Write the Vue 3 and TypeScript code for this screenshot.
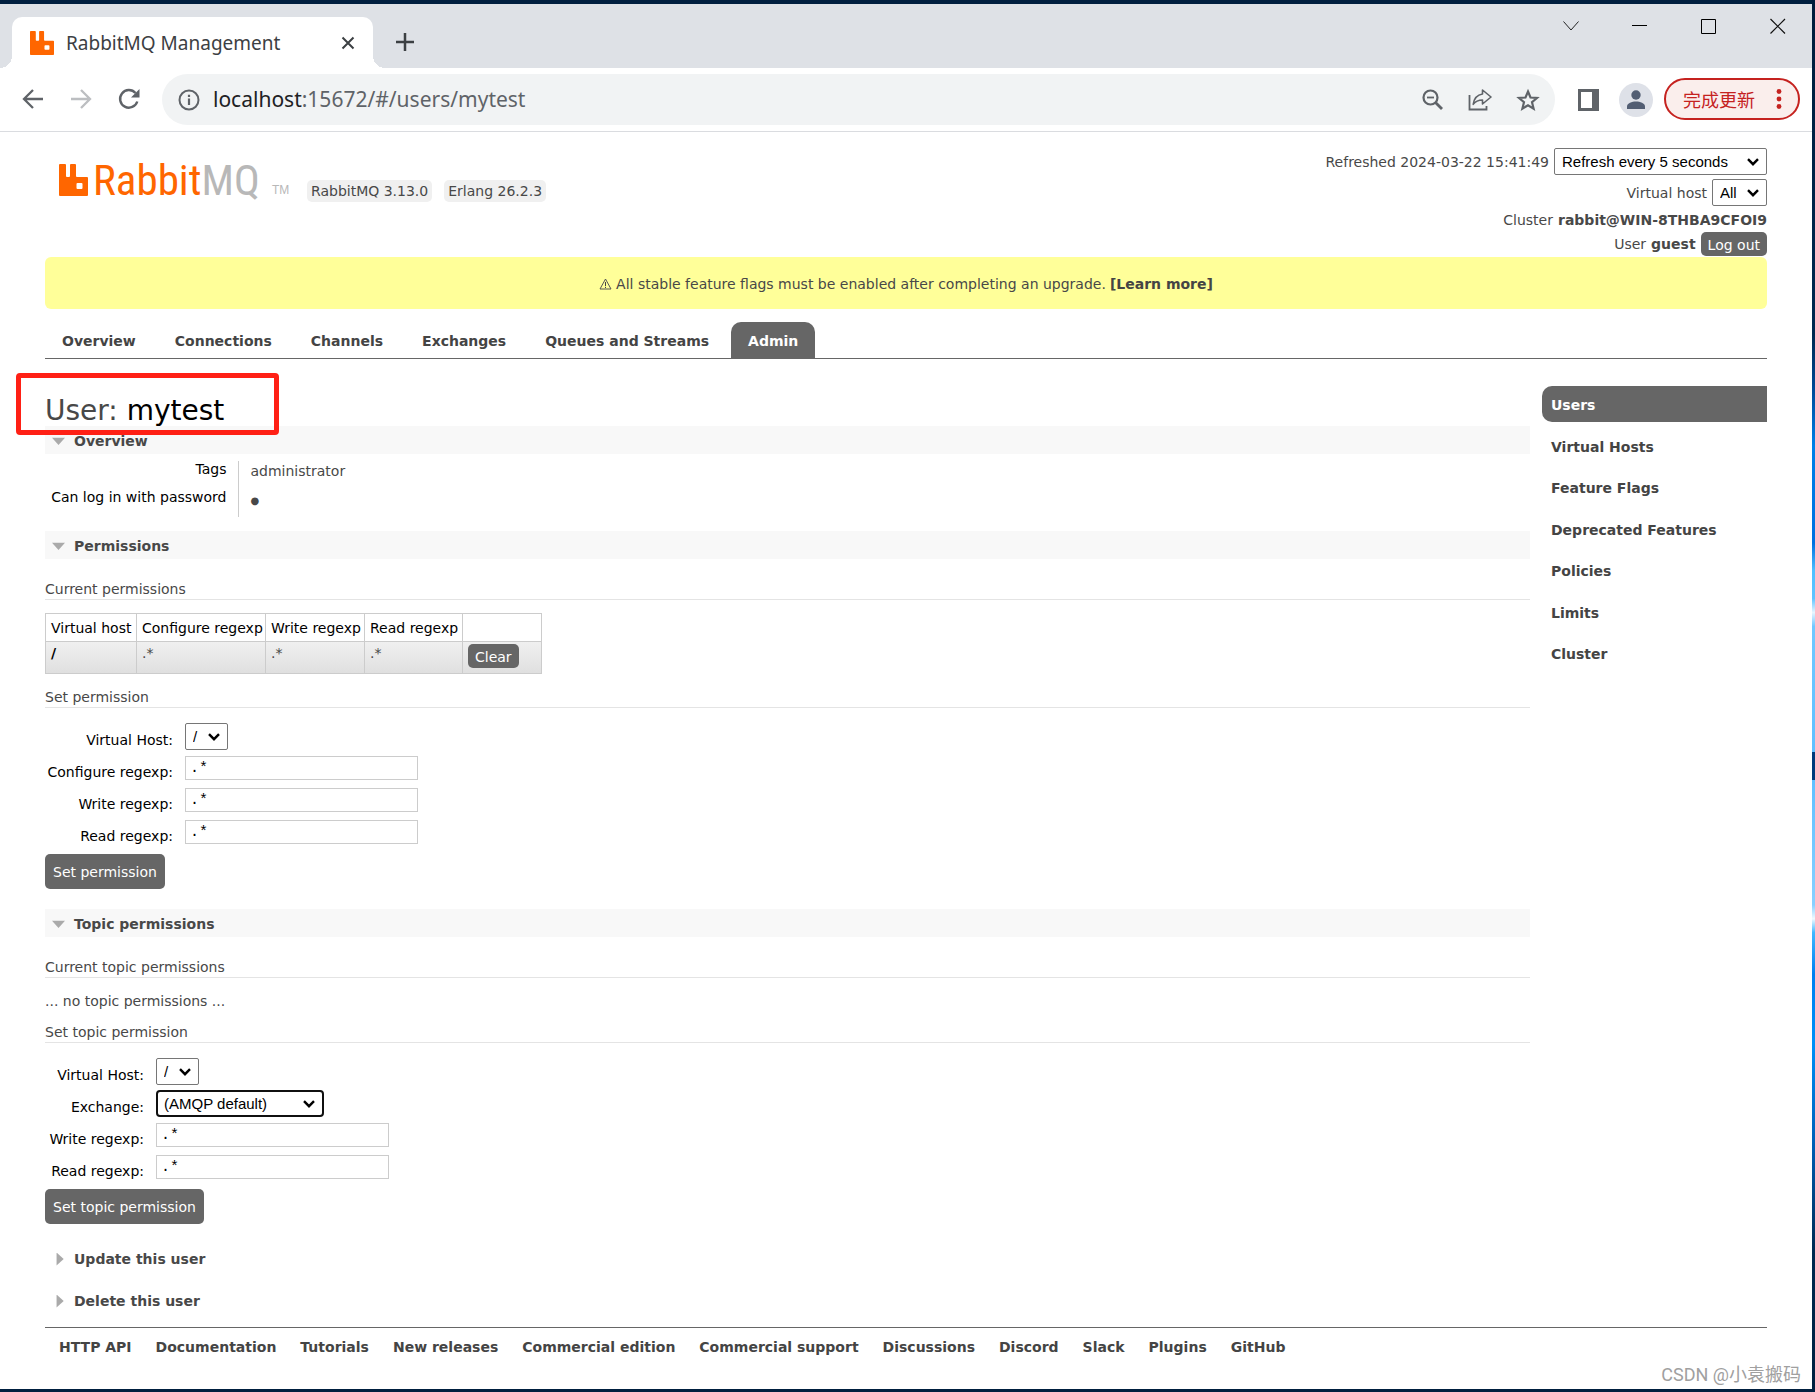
<script setup lang="ts">
import { ref } from 'vue'

const tabs = ['Overview', 'Connections', 'Channels', 'Exchanges', 'Queues and Streams', 'Admin']
const activeTab = ref('Admin')

const sections = [
  'Users',
  'Virtual Hosts',
  'Feature Flags',
  'Deprecated Features',
  'Policies',
  'Limits',
  'Cluster',
]
const activeSection = ref('Users')

const footerLinks = [
  'HTTP API',
  'Documentation',
  'Tutorials',
  'New releases',
  'Commercial edition',
  'Commercial support',
  'Discussions',
  'Discord',
  'Slack',
  'Plugins',
  'GitHub',
]

const permission = ref({ configure: '.*', write: '.*', read: '.*' })
const topicPermission = ref({ write: '.*', read: '.*' })
const address = { host: 'localhost', rest: ':15672/#/users/mytest' }
</script>

<template>
  <div class="desktop">
    <div class="window">
      <header class="tabstrip">
        <div class="browser-tab">
          <svg class="favicon" viewBox="0 0 29 32" preserveAspectRatio="none" aria-hidden="true">
            <path
              fill="#ff6600"
              fill-rule="evenodd"
              d="M1 0h5q1 0 1 1v11q0 1 1 1h2q1 0 1-1V1q0-1 1-1h4q1 0 1 1v11q0 1 1 1h10q1 0 1 1v17q0 1-1 1H1q-1 0-1-1V1q0-1 1-1zM18.500 19q-1 0-1 1v4q0 1 1 1h4q1 0 1-1v-4q0-1-1-1z"
            />
          </svg>
          <span class="browser-tab-title">RabbitMQ Management</span>
          <button class="icon-button" type="button" aria-label="Close tab">
            <svg width="14" height="14" viewBox="0 0 14 14">
              <path d="M1.500 1.500l11 11M12.500 1.500l-11 11" stroke="#3c4043" stroke-width="2" />
            </svg>
          </button>
        </div>
        <button class="icon-button new-tab" type="button" aria-label="New tab">
          <svg width="18" height="18" viewBox="0 0 18 18">
            <path d="M9 0v18M0 9h18" stroke="#3c4043" stroke-width="2.500" />
          </svg>
        </button>
        <div class="window-controls">
          <button class="icon-button" type="button" aria-label="Search tabs">
            <svg width="16" height="16" viewBox="0 0 16 16">
              <path d="M.5 3.500l7.500 8.500 7.500-8.500" fill="none" stroke="#222" />
            </svg>
          </button>
          <button class="icon-button" type="button" aria-label="Minimize">
            <svg width="16" height="16" viewBox="0 0 16 16">
              <path d="M0 7.500h15" stroke="#000" />
            </svg>
          </button>
          <button class="icon-button" type="button" aria-label="Maximize">
            <svg width="16" height="16" viewBox="0 0 16 16">
              <path d="M.5 1.500h14v14h-14z" fill="none" stroke="#000" />
            </svg>
          </button>
          <button class="icon-button" type="button" aria-label="Close">
            <svg width="16" height="16" viewBox="0 0 16 16">
              <path d="M.5 1l14.500 14.500M15 1L.5 15.500" stroke="#111" stroke-width="1.200" />
            </svg>
          </button>
        </div>
      </header>

      <div class="toolbar">
        <div class="nav-buttons">
          <button class="icon-button" type="button" aria-label="Back">
            <svg width="22" height="22" viewBox="0 0 22 22">
              <path d="M21 11H3M11 2l-9 9 9 9" fill="none" stroke="#5f6368" stroke-width="2.300" />
            </svg>
          </button>
          <button class="icon-button" type="button" aria-label="Forward">
            <svg width="22" height="22" viewBox="0 0 22 22">
              <path d="M1 11h18M11 2l9 9-9 9" fill="none" stroke="#bcbec1" stroke-width="2.300" />
            </svg>
          </button>
          <button class="icon-button" type="button" aria-label="Reload">
            <svg width="22" height="22" viewBox="0 0 22 22">
              <path
                d="M19.300 13.500A8.800 8.800 0 1 1 17.500 5"
                fill="none"
                stroke="#5f6368"
                stroke-width="2.400"
              />
              <path d="M21.500 1v8.500H13z" fill="#5f6368" />
            </svg>
          </button>
        </div>
        <div class="address-bar">
          <svg width="22" height="22" viewBox="0 0 22 22" aria-hidden="true">
            <circle cx="11" cy="11" r="9.500" fill="none" stroke="#5f6368" stroke-width="2" />
            <path d="M11 9.500v6.500M11 5.800v2.200" stroke="#5f6368" stroke-width="2.200" />
          </svg>
          <div class="url">
            <span class="url-host">{{ address.host }}</span>{{ address.rest }}
          </div>
          <button class="icon-button" type="button" aria-label="Zoom">
            <svg width="22" height="22" viewBox="0 0 22 22">
              <circle cx="8.500" cy="8.500" r="7" fill="none" stroke="#5f6368" stroke-width="2.200" />
              <path d="M5 8.500h7" stroke="#5f6368" stroke-width="1.800" />
              <path d="M13.500 13.500l6.500 6.500" stroke="#5f6368" stroke-width="2.800" />
            </svg>
          </button>
          <button class="icon-button" type="button" aria-label="Share">
            <svg width="24" height="22" viewBox="0 0 24 22">
              <path
                d="M1.500 6v14.500h17V17"
                fill="none"
                stroke="#5f6368"
                stroke-width="1.800"
              />
              <path
                d="M14.500 1l8.500 7-8.500 7v-4c-4 0-7 1.200-9.300 4.300C6 10 9 5.800 14.500 5z"
                fill="none"
                stroke="#5f6368"
                stroke-width="1.600"
                stroke-linejoin="round"
              />
            </svg>
          </button>
          <button class="icon-button" type="button" aria-label="Bookmark">
            <svg width="24" height="24" viewBox="0 0 24 24">
              <path
                d="M12 3.500l2.500 6 6.500.5-5 4.200 1.600 6.400L12 17.200l-5.600 3.400L8 14.200 3 10l6.500-.5z"
                fill="none"
                stroke="#5f6368"
                stroke-width="2.200"
              />
            </svg>
          </button>
        </div>
        <button class="icon-button side-panel" type="button" aria-label="Side panel">
          <svg width="22" height="22" viewBox="0 0 22 22">
            <path d="M0 0h21v22H0zM3 3v16h11V3z" fill="#5f6368" fill-rule="evenodd" />
          </svg>
        </button>
        <button class="avatar" type="button" aria-label="Profile">
          <svg width="20" height="20" viewBox="0 0 20 20">
            <circle cx="10" cy="5" r="4.700" fill="#525e73" />
            <path d="M1 19v-2.500c0-3.500 5-5 9-5s9 1.500 9 5V19z" fill="#525e73" />
          </svg>
        </button>
        <button class="update" type="button">
          完成更新
          <svg width="6" height="20" viewBox="0 0 6 20" aria-hidden="true">
            <g fill="#c5221f">
              <circle cx="3" cy="2.500" r="2.400" />
              <circle cx="3" cy="10" r="2.400" />
              <circle cx="3" cy="17.500" r="2.400" />
            </g>
          </svg>
        </button>
      </div>

      <div class="page">
        <div class="head">
          <div class="brand">
            <a class="logo" href="#/" aria-label="RabbitMQ">
              <svg width="29" height="32" viewBox="0 0 29 32" aria-hidden="true">
                <path
                  fill="#ff6600"
                  fill-rule="evenodd"
                  d="M1 0h5q1 0 1 1v11q0 1 1 1h2q1 0 1-1V1q0-1 1-1h4q1 0 1 1v11q0 1 1 1h10q1 0 1 1v17q0 1-1 1H1q-1 0-1-1V1q0-1 1-1zM18.500 19q-1 0-1 1v4q0 1 1 1h4q1 0 1-1v-4q0-1-1-1z"
                />
              </svg>
              <span class="logo-text">Rabbit<span class="logo-mq">MQ</span></span>
              <span class="logo-tm">TM</span>
            </a>
            <span class="badge">RabbitMQ 3.13.0</span>
            <span class="badge">Erlang 26.2.3</span>
          </div>
          <div class="status">
            <div class="status-row">
              <label for="refresh">Refreshed 2024-03-22 15:41:49</label>
              <select id="refresh" class="refresh-select">
                <option>Refresh every 5 seconds</option>
              </select>
            </div>
            <div class="status-row">
              <label for="vhost">Virtual host</label>
              <select id="vhost" class="vhost-select">
                <option>All</option>
              </select>
            </div>
            <div class="status-row status-cluster">
              <span>Cluster</span>
              <b>rabbit@WIN-8THBA9CFOI9</b>
            </div>
            <div class="status-row">
              <span>User</span>
              <b>guest</b>
              <button class="button button-small" type="button">Log out</button>
            </div>
          </div>
        </div>

        <div class="warning">
          <svg width="13" height="12" viewBox="0 0 13 12" aria-hidden="true">
            <path d="M6.500 1L12 11H1z" fill="none" stroke="#555" stroke-linejoin="round" />
            <path d="M6.500 4v4M6.500 8.800v1.200" stroke="#444" />
          </svg>
          <span>All stable feature flags must be enabled after completing an upgrade.</span>
          <a href="#/feature-flags">[Learn more]</a>
        </div>

        <nav class="tabs">
          <a
            v-for="tab in tabs"
            :key="tab"
            href="#/"
            :class="{ active: tab === activeTab }"
            @click.prevent="activeTab = tab"
            >{{ tab }}</a
          >
        </nav>

        <div class="columns">
          <main class="main">
            <h1>User: <b>mytest</b><span class="highlight"></span></h1>

            <section>
              <h2 class="bar open">Overview</h2>
              <table class="facts">
                <tbody>
                  <tr>
                    <th scope="row">Tags</th>
                    <td>administrator</td>
                  </tr>
                  <tr>
                    <th scope="row">Can log in with password</th>
                    <td><span class="dot">●</span></td>
                  </tr>
                </tbody>
              </table>
            </section>

            <section>
              <h2 class="bar open">Permissions</h2>
              <h3 class="first">Current permissions</h3>
              <table class="list">
                <colgroup>
                  <col class="col-vhost" />
                  <col class="col-configure" />
                  <col class="col-write" />
                  <col class="col-read" />
                  <col class="col-action" />
                </colgroup>
                <thead>
                  <tr>
                    <th scope="col">Virtual host</th>
                    <th scope="col">Configure regexp</th>
                    <th scope="col">Write regexp</th>
                    <th scope="col">Read regexp</th>
                    <th></th>
                  </tr>
                </thead>
                <tbody>
                  <tr>
                    <td><a class="vhost-link" href="#/vhosts">/</a></td>
                    <td>.*</td>
                    <td>.*</td>
                    <td>.*</td>
                    <td><button class="button button-small" type="button">Clear</button></td>
                  </tr>
                </tbody>
              </table>

              <h3>Set permission</h3>
              <form class="form" @submit.prevent>
                <div class="fields fields-wide">
                  <label for="p-vhost">Virtual Host:</label>
                  <select id="p-vhost" class="short-select">
                    <option>/</option>
                  </select>
                  <label for="p-configure">Configure regexp:</label>
                  <input id="p-configure" v-model="permission.configure" type="text" />
                  <label for="p-write">Write regexp:</label>
                  <input id="p-write" v-model="permission.write" type="text" />
                  <label for="p-read">Read regexp:</label>
                  <input id="p-read" v-model="permission.read" type="text" />
                </div>
                <button class="button" type="submit">Set permission</button>
              </form>
            </section>

            <section>
              <h2 class="bar open">Topic permissions</h2>
              <h3 class="first">Current topic permissions</h3>
              <p class="empty">... no topic permissions ...</p>
              <h3>Set topic permission</h3>
              <form class="form" @submit.prevent>
                <div class="fields fields-narrow">
                  <label for="t-vhost">Virtual Host:</label>
                  <select id="t-vhost" class="short-select">
                    <option>/</option>
                  </select>
                  <label for="t-exchange">Exchange:</label>
                  <select id="t-exchange" class="exchange-select">
                    <option>(AMQP default)</option>
                  </select>
                  <label for="t-write">Write regexp:</label>
                  <input id="t-write" v-model="topicPermission.write" type="text" />
                  <label for="t-read">Read regexp:</label>
                  <input id="t-read" v-model="topicPermission.read" type="text" />
                </div>
                <button class="button" type="submit">Set topic permission</button>
              </form>
            </section>

            <section class="collapsed">
              <h2 class="bar closed">Update this user</h2>
              <h2 class="bar closed">Delete this user</h2>
            </section>
          </main>

          <nav class="side">
            <a
              v-for="section in sections"
              :key="section"
              href="#/"
              :class="{ active: section === activeSection }"
              @click.prevent="activeSection = section"
              >{{ section }}</a
            >
          </nav>
        </div>

        <footer class="footer">
          <a v-for="link in footerLinks" :key="link" href="#/">{{ link }}</a>
        </footer>
      </div>
      <div class="watermark">CSDN @小袁搬码</div>
    </div>
  </div>
</template>

<style>
body {
  margin: 0;
}
</style>

<style scoped>
* {
  box-sizing: border-box;
}

.desktop {
  display: flex;
  min-height: 100vh;
  padding: 4px 3px 3px 0;
  background:
    linear-gradient(
        #001c3c 0%,
        #002850 24%,
        #004a98 28%,
        #0080e8 32%,
        #0070e0 39%,
        #50c0ff 41%,
        #60c4ff 43%,
        #e8f6ff 44%,
        #70c8ff 45%,
        #60c0ff 54%,
        #003a7c 54%,
        #003a7c 56%,
        #60c0ff 56%,
        #88d0ff 65%,
        #f0faff 66%,
        #40b8ff 67%,
        #0080f0 70%,
        #0090f8 75%,
        #0060b8 82%,
        #002850 90%,
        #00203f 100%
      )
      right / 3px 100% no-repeat,
    #001f3f;
}

.window {
  position: relative;
  display: flex;
  flex: 1;
  flex-direction: column;
  min-width: 0;
  background: #fff;
  color: #484848;
  font: 14px/20px Verdana, 'DejaVu Sans', sans-serif;
}

button,
select,
input {
  margin: 0;
  font: inherit;
}

.icon-button {
  display: flex;
  padding: 0;
  border: 0;
  background: none;
}

/* Browser frame */

.tabstrip {
  display: flex;
  align-items: flex-end;
  height: 64px;
  padding-left: 12px;
  background: #dee1e6;
}

.browser-tab {
  position: relative;
  display: flex;
  align-items: center;
  width: 361px;
  height: 51px;
  padding: 0 18px;
  border-radius: 10px 10px 0 0;
  background: #fff;
}

.browser-tab::before,
.browser-tab::after {
  position: absolute;
  bottom: 0;
  width: 12px;
  height: 12px;
  content: '';
}

.browser-tab::before {
  right: 100%;
  background: radial-gradient(circle at 0 0, transparent 12px, #fff 12px);
}

.browser-tab::after {
  left: 100%;
  background: radial-gradient(circle at 100% 0, transparent 12px, #fff 12px);
}

.favicon {
  width: 24px;
  height: 24px;
}

.browser-tab-title {
  flex: 1;
  margin-left: 12px;
  color: #3c4043;
  font: 19px/28px 'Noto Sans', sans-serif;
}

.new-tab {
  margin: 0 0 17px 23px;
}

.window-controls {
  display: flex;
  gap: 53px;
  align-self: flex-start;
  margin: 14px 26px 0 auto;
}

.toolbar {
  display: flex;
  align-items: center;
  height: 64px;
  padding-right: 12px;
  border-bottom: 1px solid #dadce0;
}

.nav-buttons {
  display: flex;
  gap: 26px;
  width: 162px;
  padding: 0 0 2px 22px;
}

.address-bar {
  display: flex;
  flex: 1;
  align-items: center;
  gap: 24px;
  height: 51px;
  padding: 0 15px 0 16px;
  border-radius: 26px;
  background: #f1f3f4;
}

.url {
  flex: 1;
  margin-left: -11px;
  padding-bottom: 2px;
  color: #5f6368;
  font: 21px/30px 'Noto Sans', sans-serif;
}

.url-host {
  color: #202124;
}

.side-panel {
  margin-left: 23px;
}

.avatar {
  display: flex;
  align-items: center;
  justify-content: center;
  width: 34px;
  height: 34px;
  margin-left: 19px;
  padding: 0;
  border: 0;
  border-radius: 50%;
  background: #dee1e8;
}

.update {
  display: flex;
  align-items: center;
  justify-content: space-between;
  width: 136px;
  height: 42px;
  margin: 0 0 2px 11px;
  padding: 0 16px 0 17px;
  border: 2px solid #c5221f;
  border-radius: 21px;
  background: #faeeec;
  color: #c5221f;
  font: 18px/26px 'Noto Sans CJK SC', sans-serif;
}

/* Management page */

.page {
  padding: 16px 45px 31px;
}

.page a {
  color: #444;
  font-weight: bold;
  text-decoration: none;
}

.head {
  display: flex;
  justify-content: space-between;
  padding-bottom: 1px;
}

.brand {
  display: flex;
  align-items: flex-start;
  gap: 12px;
  padding: 16px 0 0 14px;
}

.page .logo {
  display: flex;
  width: 236px;
  color: #ff6600;
  font-weight: normal;
}

.logo-text {
  width: 174px;
  margin-left: 5px;
  font: 43px/32px 'Roboto Condensed', 'DejaVu Sans Condensed', sans-serif;
}

.logo-mq,
.logo-tm {
  color: #b8b8b8;
}

.logo-tm {
  align-self: flex-end;
  margin-left: 5px;
  font: 12px/12px 'Liberation Sans', sans-serif;
}

.badge {
  height: 22px;
  margin-top: 16px;
  padding: 0 4px;
  border-radius: 5px;
  background: #f0f0f0;
  line-height: 22px;
}

.status {
  display: flex;
  flex-direction: column;
  align-items: flex-end;
  gap: 4px;
}

.status-row {
  display: flex;
  align-items: center;
  gap: 5px;
}

.status-cluster {
  height: 18px;
  padding-top: 2px;
}

select {
  height: 27px;
  padding: 0 7px;
  border: 1px solid #767676;
  border-radius: 2px;
  appearance: none;
  background: #fff
    url("data:image/svg+xml,%3Csvg xmlns='http://www.w3.org/2000/svg' width='12' height='8' viewBox='0 0 12 8'%3E%3Cpath d='M1 1.200l5 5 5-5' fill='none' stroke='%23000' stroke-width='2.400'/%3E%3C/svg%3E")
    right 7px center no-repeat;
  color: #000;
  font: 15px/20px 'Liberation Sans', Arial, sans-serif;
}

.refresh-select {
  width: 213px;
}

.vhost-select {
  width: 55px;
}

.short-select {
  width: 43px;
}

.exchange-select {
  width: 168px;
  padding: 0 6px;
  border: 2px solid #101010;
  border-radius: 4px;
}

.button {
  height: 35px;
  padding: 0 8px;
  border: 0;
  border-radius: 5px;
  background: #666;
  color: #fff;
}

.button-small {
  height: 24px;
  padding: 1px 7px 0;
}

.warning {
  display: flex;
  align-items: center;
  justify-content: center;
  gap: 4px;
  height: 52px;
  padding-top: 2px;
  border-radius: 6px;
  background: #ffff99;
}

.tabs {
  display: flex;
  gap: 5px;
  margin-top: 13px;
  border-bottom: 1px solid #666;
}

.tabs a {
  padding: 9px 17px 7px;
  border-radius: 10px 10px 0 0;
}

.tabs .active,
.side .active {
  background: #666;
  color: #fff;
}

.columns {
  display: flex;
  gap: 12px;
}

.main {
  flex: 1;
  padding-top: 37px;
}

.side {
  display: flex;
  flex-direction: column;
  justify-content: space-between;
  width: 225px;
  height: 285px;
  margin-top: 27px;
}

.side a {
  padding: 9px 9px 7px;
  border-radius: 10px 0 0 10px;
}

h1 {
  position: relative;
  margin: 0;
  font-size: 28px;
  font-weight: normal;
  line-height: 30px;
}

h1 b {
  color: #000;
  font-weight: normal;
}

/* Annotation frame over the page title */
.highlight {
  position: absolute;
  top: -23px;
  left: -29px;
  width: 263px;
  height: 62px;
  border: 5px solid #ff2015;
  border-radius: 4px;
}

.bar {
  display: flex;
  align-items: center;
  height: 28px;
  margin: 0;
  padding: 2px 0 0 7px;
  font-size: 14px;
  line-height: 20px;
}

.bar::before {
  width: 13px;
  height: 13px;
  margin-right: 9px;
  background: #aaa;
  content: '';
}

.bar.open {
  background: #f8f8f8;
}

.bar.open::before {
  clip-path: polygon(0 25%, 100% 25%, 50% 80%);
}

.bar.closed::before {
  clip-path: polygon(35% 0, 90% 50%, 35% 100%);
}

.collapsed {
  display: flex;
  flex-direction: column;
  gap: 14px;
}

.facts {
  margin: 7px 0 14px;
  border-collapse: collapse;
}

.facts th {
  width: 193px;
  padding: 0 11px 0 0;
  border-right: 1px solid #ccc;
  color: #000;
  font-weight: normal;
  text-align: right;
  vertical-align: top;
  line-height: 16px;
  white-space: nowrap;
}

.facts td {
  height: 28px;
  padding: 0 0 0 12px;
  vertical-align: top;
}

.dot {
  font-size: 10px;
}

h3 {
  margin: 13px 0 15px;
  border-bottom: 1px solid #e4e4e4;
  font-size: 14px;
  font-weight: normal;
}

h3.first {
  margin: 20px 0 13px;
}

.empty {
  margin: 0 0 11px;
}

.empty + h3 {
  margin-top: 0;
}

.list {
  border-collapse: collapse;
  table-layout: fixed;
  width: 497px;
}

.col-vhost {
  width: 91px;
}

.col-configure {
  width: 129px;
}

.col-write {
  width: 99px;
}

.col-read {
  width: 98px;
}

.col-action {
  width: 79px;
}

.list th,
.list td {
  padding: 4px 5px 3px;
  border: 1px solid #ccc;
  text-align: left;
  vertical-align: top;
  white-space: nowrap;
}

.list th {
  height: 28px;
  color: #000;
  font-weight: normal;
}

.list td {
  height: 32px;
  padding: 2px 5px;
  line-height: 18px;
}

.list tbody tr {
  background: linear-gradient(#f0f0f0, #dfdfdf);
}

.list .button {
  display: block;
}

.page .vhost-link {
  color: #000;
}

.form {
  display: flex;
  flex-direction: column;
  align-items: flex-start;
  gap: 3px;
  margin-bottom: 20px;
}

.fields {
  display: grid;
  grid-auto-rows: 32px;
  column-gap: 12px;
}

.fields-wide {
  grid-template-columns: 128px 233px;
}

.fields-narrow {
  grid-template-columns: 99px 233px;
}

.fields label {
  padding-top: 7px;
  color: #000;
  text-align: right;
  white-space: nowrap;
}

.fields input {
  height: 24px;
  margin-top: 1px;
  padding: 0 4px;
  border: 1px solid #ccc;
  color: #000;
  font: 15px/20px 'Liberation Mono', monospace;
}

.footer {
  display: flex;
  gap: 24px;
  margin-top: 13px;
  padding: 9px 14px 0;
  border-top: 1px solid #666;
}

.watermark {
  position: absolute;
  right: 11px;
  bottom: 1px;
  color: #a0a0a0;
  font: 18px/26px Roboto, 'Noto Sans CJK SC', sans-serif;
}
</style>
